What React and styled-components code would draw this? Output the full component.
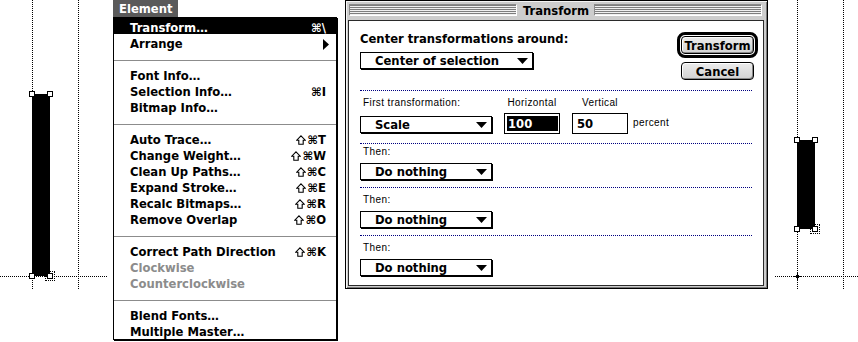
import React from 'react';
import styled, { createGlobalStyle, css } from 'styled-components';

const GlobalStyle = createGlobalStyle`
  html, body {
    margin: 0;
    padding: 0;
    background: #fff;
  }
`;

const chicago = css`
  font-family: 'DejaVu Sans', 'Liberation Sans', sans-serif;
  font-weight: bold;
  font-size: 11.6px;
`;

const geneva = css`
  font-family: 'Liberation Sans', Arial, sans-serif;
  font-size: 10px;
  letter-spacing: 0.4px;
`;

const Screen = styled.div`
  position: relative;
  width: 858px;
  height: 342px;
  overflow: hidden;
  background: #fff;
`;

// canvas guides and shapes sit on a free canvas
const VGuide = styled.div`
  position: absolute;
  left: ${({ $x }) => $x}px;
  top: 0;
  height: 289px;
  border-left: 1px dotted #000;
`;

const HGuide = styled.div`
  position: absolute;
  left: ${({ $x }) => $x}px;
  top: ${({ $y }) => $y}px;
  width: ${({ $w }) => $w}px;
  border-top: 1px dotted #000;
`;

const Bar = styled.div`
  position: absolute;
  left: ${({ $x }) => $x}px;
  top: ${({ $y }) => $y}px;
  width: ${({ $w }) => $w}px;
  height: ${({ $h }) => $h}px;
  background: #000;
`;

const Handle = styled.div`
  position: absolute;
  left: ${({ $x }) => $x - 3}px;
  top: ${({ $y }) => $y - 3}px;
  width: 6px;
  height: 6px;
  box-sizing: border-box;
  border: 1px solid #000;
  background: #fff;
  ${({ $focus }) => $focus && css`
    outline: 1px dotted #000;
    outline-offset: 1px;
  `}
`;

const Cross = styled.svg`
  position: absolute;
  left: ${({ $x }) => $x - 4}px;
  top: ${({ $y }) => $y - 4}px;
`;

/* ---------- menu ---------- */

const MenuWrap = styled.div`
  position: absolute;
  left: 113px;
  top: 0;
  display: flex;
  flex-direction: column;
  align-items: flex-start;
  ${chicago};
`;

const MenuTitle = styled.div`
  width: 65px;
  height: 17px;
  box-sizing: border-box;
  padding: 1px 0 0 6px;
  line-height: 16px;
  background: #5a5a5a;
  color: #fff;
`;

const MenuPanel = styled.div`
  width: 224px;
  box-sizing: border-box;
  border: 1px solid #000;
  box-shadow: 1px 1px 0 #000;
  background: #fff;
  padding-bottom: 1px;
`;

const MenuItem = styled.div`
  height: 16px;
  box-sizing: border-box;
  padding: 4px 10px 0 16px;
  display: flex;
  align-items: center;
  justify-content: space-between;
  color: ${({ $disabled }) => ($disabled ? '#8c8c8c' : '#000')};
  ${({ $active }) => $active && css`
    background: #000;
    color: #fff;
  `}
`;

const Shortcut = styled.span`
  display: flex;
  align-items: center;
  gap: 1px;
`;

const SubArrow = styled.svg`
  margin-right: -3px;
`;

const MenuSep = styled.div`
  height: 16px;
  position: relative;
  &::after {
    content: '';
    position: absolute;
    left: 0;
    right: 0;
    top: 10px;
    border-top: 1px solid #8c8c8c;
  }
`;

/* ---------- dialog ---------- */

const Window = styled.div`
  position: absolute;
  left: 345px;
  top: 0;
  width: 423px;
  height: 289px;
  box-sizing: border-box;
  border: 1px solid #000;
  background: #cdcdcd;
  box-shadow: inset 1px 1px #f4f4f4, inset -1px -1px #7a7a7a;
  padding: 0 3px 2px 2px;
  display: flex;
  flex-direction: column;
  ${chicago};
`;

const TitleBar = styled.div`
  height: 19px;
  display: flex;
  align-items: center;
  gap: 4px;
  padding: 0 2px;
`;

const Stripes = styled.div`
  flex: 1;
  height: 11px;
  background: repeating-linear-gradient(to bottom, #7e7e7e 0 1px, #f0f0f0 1px 2px);
  box-shadow: inset -1px -1px #fff, -1px -1px 0 #8a8a8a;
`;

const TitleText = styled.div`
  padding: 1px 2px 0;
`;

const Content = styled.div`
  flex: 1;
  background: #fff;
  border: 1px solid #2a2a2a;
  padding: 0 5px 0 11px;
  display: flex;
  flex-direction: column;
`;

const TopSection = styled.div`
  height: 69px;
  display: flex;
  justify-content: space-between;
  align-items: flex-start;
`;

const Heading = styled.div`
  padding-top: 10px;
  line-height: 16px;
`;

const Popup = styled.div`
  width: ${({ $w }) => $w}px;
  height: 17px;
  margin-top: ${({ $mt }) => $mt}px;
  box-sizing: border-box;
  border: 1px solid #000;
  box-shadow: 1px 1px 0 #000;
  background: #fff;
  display: flex;
  align-items: center;
  justify-content: space-between;
  padding: 1px 4px 0 14px;
`;

const ButtonCol = styled.div`
  margin-top: 11px;
  display: flex;
  flex-direction: column;
  align-items: center;
  gap: 4px;
`;

const DefaultRing = styled.div`
  border: 3px solid #000;
  border-radius: 8px;
  padding: 1px;
`;

const Button = styled.div`
  width: 73px;
  height: 18px;
  box-sizing: border-box;
  border: 1px solid #000;
  border-radius: 4px;
  background: linear-gradient(#ececec, #d2d2d2);
  box-shadow: inset 1px 1px #fff, inset -1px -1px #8a8a8a;
  display: flex;
  align-items: center;
  justify-content: center;
  padding-top: 1px;
`;

const Separator = styled.div`
  border-top: 1px dotted #000080;
  margin-right: 6px;
`;

const Section = styled.div`
  height: ${({ $h }) => ($h ? `${$h}px` : 'auto')};
  flex: ${({ $h }) => ($h ? 'none' : 1)};
  padding-top: ${({ $pt }) => $pt}px;
  box-sizing: border-box;
  display: flex;
  align-items: flex-start;
`;

const Group = styled.div`
  display: flex;
  flex-direction: column;
  align-items: ${({ $center }) => ($center ? 'center' : 'flex-start')};
  margin-left: ${({ $ml }) => $ml || 0}px;
`;

const Label = styled.div`
  ${geneva};
  font-weight: normal;
  height: 14px;
  line-height: 14px;
  padding-left: ${({ $pl }) => $pl || 0}px;
`;

const Field = styled.div`
  width: 56px;
  height: 21px;
  margin-top: 3px;
  box-sizing: border-box;
  border: 1px solid #000;
  padding: 2px 1px 2px 2px;
  display: flex;
`;

const FieldText = styled.span`
  flex: 1;
  line-height: 16px;
  padding-left: ${({ $sel }) => ($sel ? 1 : 2)}px;
  background: ${({ $sel }) => ($sel ? '#000' : 'transparent')};
  color: ${({ $sel }) => ($sel ? '#fff' : '#000')};
`;

const Unit = styled(Label)`
  margin: 20px 0 0 5px;
`;

const Triangle = () => (
  <svg width="11" height="6" viewBox="0 0 11 6">
    <polygon points="0,0 11,0 5.5,6" fill="#000" />
  </svg>
);

const ShiftKey = () => (
  <svg width="10" height="10" viewBox="0 0 10 10">
    <path
      d="M5 0.8 L9.3 5.2 H7.2 V9.3 H2.8 V5.2 H0.7 Z"
      fill="none"
      stroke="currentColor"
      strokeWidth="1.1"
      strokeLinejoin="miter"
    />
  </svg>
);

const PopupMenu = ({ w, mt, children }) => (
  <Popup $w={w} $mt={mt}>
    <span>{children}</span>
    <Triangle />
  </Popup>
);

const menuItems = [
  { label: 'Transform…', key: '⌘\\', active: true },
  { label: 'Arrange', sub: true },
  null,
  { label: 'Font Info…' },
  { label: 'Selection Info…', key: '⌘I' },
  { label: 'Bitmap Info…' },
  null,
  { label: 'Auto Trace…', key: '⌘T', shift: true },
  { label: 'Change Weight…', key: '⌘W', shift: true },
  { label: 'Clean Up Paths…', key: '⌘C', shift: true },
  { label: 'Expand Stroke…', key: '⌘E', shift: true },
  { label: 'Recalc Bitmaps…', key: '⌘R', shift: true },
  { label: 'Remove Overlap', key: '⌘O', shift: true },
  null,
  { label: 'Correct Path Direction', key: '⌘K', shift: true },
  { label: 'Clockwise', disabled: true },
  { label: 'Counterclockwise', disabled: true },
  null,
  { label: 'Blend Fonts…' },
  { label: 'Multiple Master…' },
];

const thenRows = [
  { h: 43, pt: 1 },
  { h: 47, pt: 5 },
  { pt: 5 },
];

const SelectedBox = ({ x, y, w, h }) => (
  <>
    <Bar $x={x} $y={y} $w={w} $h={h} />
    <Handle $x={x} $y={y} />
    <Handle $x={x + w} $y={y} />
    <Handle $x={x} $y={y + h} />
    <Handle $x={x + w} $y={y + h} $focus />
  </>
);

export default function App() {
  return (
    <Screen>
      <GlobalStyle />

      <VGuide $x={32} />
      <VGuide $x={78} />
      <HGuide $x={0} $y={276} $w={107} />
      <SelectedBox x={32} y={94} w={18} h={182} />

      <VGuide $x={797} />
      <VGuide $x={843} />
      <HGuide $x={775} $y={276} $w={83} />
      <SelectedBox x={797} y={140} w={18} h={89} />
      <Cross $x={797} $y={276} width="9" height="9" viewBox="0 0 9 9">
        <rect x="3" y="3" width="3" height="3" fill="#000" />
        <rect x="4" y="0" width="1" height="9" fill="#000" />
        <rect x="0" y="4" width="9" height="1" fill="#000" />
      </Cross>

      <MenuWrap>
        <MenuTitle>Element</MenuTitle>
        <MenuPanel>
          {menuItems.map((item, i) =>
            item ? (
              <MenuItem key={i} $active={item.active} $disabled={item.disabled}>
                <span>{item.label}</span>
                {item.key && (
                  <Shortcut>
                    {item.shift && <ShiftKey />}
                    {item.key}
                  </Shortcut>
                )}
                {item.sub && (
                  <SubArrow width="6" height="11" viewBox="0 0 6 11">
                    <polygon points="0,0 6,5.5 0,11" fill="#000" />
                  </SubArrow>
                )}
              </MenuItem>
            ) : (
              <MenuSep key={i} />
            )
          )}
        </MenuPanel>
      </MenuWrap>

      <Window>
        <TitleBar>
          <Stripes />
          <TitleText>Transform</TitleText>
          <Stripes />
        </TitleBar>
        <Content>
          <TopSection>
            <div>
              <Heading>Center transformations around:</Heading>
              <PopupMenu w={173} mt={5}>Center of selection</PopupMenu>
            </div>
            <ButtonCol>
              <DefaultRing>
                <Button>Transform</Button>
              </DefaultRing>
              <Button>Cancel</Button>
            </ButtonCol>
          </TopSection>
          <Separator />
          <Section $h={52} $pt={5}>
            <Group>
              <Label $pl={3}>First transformation:</Label>
              <PopupMenu w={132} mt={6}>Scale</PopupMenu>
            </Group>
            <Group $ml={12} $center>
              <Label>Horizontal</Label>
              <Field>
                <FieldText $sel>100</FieldText>
              </Field>
            </Group>
            <Group $ml={12} $center>
              <Label>Vertical</Label>
              <Field>
                <FieldText>50</FieldText>
              </Field>
            </Group>
            <Unit>percent</Unit>
          </Section>
          {thenRows.map((r, i) => (
            <React.Fragment key={i}>
              <Separator />
              <Section $h={r.h} $pt={r.pt}>
                <Group>
                  <Label $pl={3}>Then:</Label>
                  <PopupMenu w={132} mt={4}>Do nothing</PopupMenu>
                </Group>
              </Section>
            </React.Fragment>
          ))}
        </Content>
      </Window>
    </Screen>
  );
}
